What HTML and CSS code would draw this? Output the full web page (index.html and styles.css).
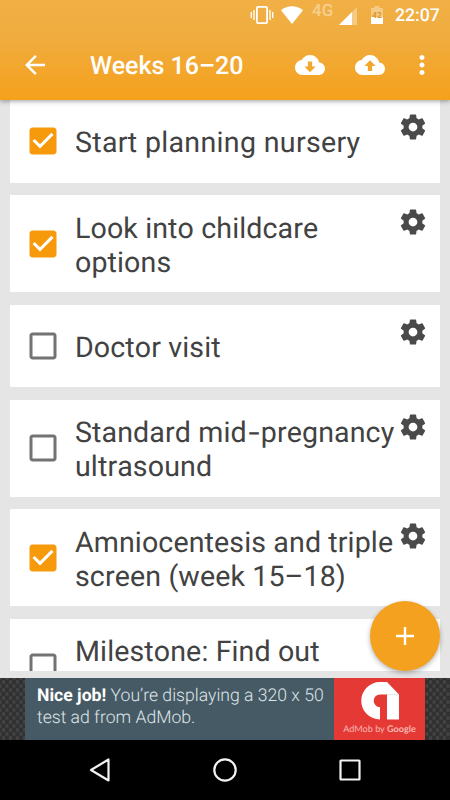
FILE: index.html
```html
<!DOCTYPE html>
<html lang="en">
<head>
<meta charset="utf-8">
<title>Weeks 16–20</title>
<link rel="stylesheet" href="styles.css">
</head>
<body>
<svg class="defs" aria-hidden="true">
  <symbol id="gear" viewBox="0 0 24 24"><path d="M19.43 12.98c.04-.32.07-.64.07-.98s-.03-.66-.07-.98l2.11-1.65c.19-.15.24-.42.12-.64l-2-3.46c-.12-.22-.39-.3-.61-.22l-2.49 1c-.52-.4-1.08-.73-1.69-.98l-.38-2.65C14.46 2.18 14.25 2 14 2h-4c-.25 0-.46.18-.49.42l-.38 2.65c-.61.25-1.17.59-1.69.98l-2.49-1c-.23-.09-.49 0-.61.22l-2 3.46c-.13.22-.07.49.12.64l2.11 1.65c-.04.32-.07.65-.07.98s.03.66.07.98l-2.11 1.65c-.19.15-.24.42-.12.64l2 3.46c.12.22.39.3.61.22l2.49-1c.52.4 1.08.73 1.69.98l.38 2.65c.03.24.24.42.49.42h4c.25 0 .46-.18.49-.42l.38-2.65c.61-.25 1.17-.59 1.69-.98l2.49 1c.23.09.49 0 .61-.22l2-3.46c.12-.22.07-.49-.12-.64l-2.11-1.65zM12 15.5c-1.93 0-3.5-1.57-3.5-3.5s1.57-3.5 3.5-3.5 3.5 1.57 3.5 3.5-1.57 3.5-3.5 3.5z"/></symbol>
  <symbol id="checked" viewBox="0 0 24 24"><path d="M19 3H5c-1.11 0-2 .9-2 2v14c0 1.1.89 2 2 2h14c1.11 0 2-.9 2-2V5c0-1.1-.89-2-2-2zm-9 14l-5-5 1.41-1.41L10 14.17l7.59-7.59L19 8l-9 9z"/></symbol>
  <symbol id="unchecked" viewBox="0 0 24 24"><path d="M19 5v14H5V5h14m0-2H5c-1.1 0-2 .9-2 2v14c0 1.1.9 2 2 2h14c1.1 0 2-.9 2-2V5c0-1.1-.9-2-2-2z"/></symbol>
</svg>
<div class="screen">
  <header class="header">
    <div class="status">
      <svg class="vibrate" width="24" height="20" viewBox="0 0 24 20"><rect x="6.9" y="1.9" width="10.200" height="16.200" rx="1" fill="none" stroke="#fff" stroke-width="1.8"/><path d="M1.300 7v6M4 5v10M20 5v10M22.700 7v6" stroke="#fff" stroke-width="1.4" fill="none"/></svg>
      <svg class="wifi" width="22" height="18" viewBox="0 0 22 18"><path d="M11 18L0 4.2C6.200-1.200 15.800-1.200 22 4.200z" fill="#fff"/></svg>
      <span class="network">4G</span>
      <svg class="signal" width="18" height="18" viewBox="0 0 18 18"><path d="M18 0v18H0z" fill="#fff" opacity=".35"/><path d="M13 5v13H0z" fill="#fff"/></svg>
      <svg class="battery" width="12" height="18" viewBox="0 0 12 18"><path d="M3.500 0h5v2H12v9H0V2h3.500z" fill="#fff" opacity=".35"/><path d="M0 11h12v7H0z" fill="#fff"/><text x="6" y="11.800" text-anchor="middle" class="level">42</text></svg>
      <span class="clock">22:07</span>
    </div>
    <div class="toolbar">
      <svg class="icon back" viewBox="0 0 24 24"><path d="M20 11H7.830l5.590-5.590L12 4l-8 8 8 8 1.410-1.410L7.830 13H20v-2z"/></svg>
      <h1 class="title">Weeks 16–20</h1>
      <svg class="icon" viewBox="0 0 24 24"><path d="M19.350 10.040C18.670 6.590 15.640 4 12 4 9.110 4 6.600 5.640 5.350 8.040 2.340 8.360 0 10.910 0 14c0 3.310 2.690 6 6 6h13c2.760 0 5-2.240 5-5 0-2.640-2.050-4.780-4.650-4.960zM16.500 13.200L12 17.700l-4.500-4.500h2.800V9.200h3.400v4z"/></svg>
      <svg class="icon" viewBox="0 0 24 24"><path d="M19.350 10.040C18.670 6.590 15.640 4 12 4 9.110 4 6.600 5.640 5.350 8.040 2.340 8.360 0 10.910 0 14c0 3.310 2.690 6 6 6h13c2.760 0 5-2.240 5-5 0-2.640-2.050-4.780-4.650-4.960zM13.700 12.700v4h-3.400v-4H7.500L12 8.200l4.500 4.500z"/></svg>
      <svg class="icon more" viewBox="0 0 24 24"><path d="M12 8c1.100 0 2-.9 2-2s-.9-2-2-2-2 .9-2 2 .9 2 2 2zm0 2c-1.100 0-2 .9-2 2s.9 2 2 2 2-.9 2-2-.9-2-2-2zm0 6c-1.100 0-2 .9-2 2s.9 2 2 2 2-.9 2-2-.9-2-2-2z"/></svg>
    </div>
  </header>
  <main class="content">
    <ul class="list">
      <li class="card"><svg class="box on"><use href="#checked"/></svg><span class="label wide">Start planning nursery</span><svg class="gear"><use href="#gear"/></svg></li>
      <li class="card tall"><svg class="box on"><use href="#checked"/></svg><span class="label">Look into childcare<br>options</span><svg class="gear"><use href="#gear"/></svg></li>
      <li class="card"><svg class="box"><use href="#unchecked"/></svg><span class="label">Doctor visit</span><svg class="gear"><use href="#gear"/></svg></li>
      <li class="card tall"><svg class="box"><use href="#unchecked"/></svg><span class="label">Standard mid<span class="hyphen">-</span>pregnancy<br>ultrasound</span><svg class="gear"><use href="#gear"/></svg></li>
      <li class="card tall"><svg class="box on"><use href="#checked"/></svg><span class="label">Amniocentesis and triple<br>screen (week 15–18)</span><svg class="gear"><use href="#gear"/></svg></li>
      <li class="card tall"><svg class="box"><use href="#unchecked"/></svg><span class="label">Milestone: Find out<br>&nbsp;</span></li>
    </ul>
    <button class="fab" aria-label="Add"><svg width="18" height="18" viewBox="0 0 18 18"><path d="M9 0v18M0 9h18" stroke="#fff" stroke-width="2.400"/></svg></button>
  </main>
  <aside class="ad">
    <p class="ad-text"><b>Nice job!</b> You’re displaying a 320 x 50<br>test ad from AdMob.</p>
    <div class="ad-logo">
      <svg width="38" height="38" viewBox="0 0 38 38"><path d="M19 0h7l12 12.500V37.500H26V12.500h-7a6.300 6.300 0 0 0 0 12.700V37.500A18.750 18.750 0 0 1 19 0z" fill="#fff"/><path d="M26 12.500h12" stroke="#ddd" stroke-width=".7"/></svg>
      <span>AdMob by <b>Google</b></span>
    </div>
  </aside>
  <nav class="nav">
    <svg width="24" height="26" viewBox="0 0 24 26"><path d="M20.500 2.500v21L3 13z"/></svg>
    <svg width="26" height="26" viewBox="0 0 26 26"><circle cx="13" cy="13" r="10.700"/></svg>
    <svg width="24" height="26" viewBox="0 0 24 26"><rect x="2.500" y="3.500" width="19" height="19" rx=".5"/></svg>
  </nav>
</div>
</body>
</html>
```
FILE: styles.css
```css
* { box-sizing: border-box; }
body { margin: 0; font-family: Roboto, "Liberation Sans", sans-serif; text-rendering: geometricPrecision; }
.defs { display: none; }
.screen { width: 450px; height: 800px; display: flex; flex-direction: column; overflow: hidden; background: #e5e5e5; }
svg { display: block; flex: none; }

.header { position: relative; z-index: 1; height: 100px; flex: none; color: #fff; background: linear-gradient(#f1af45 0, #f0ac3e 38px, #f5a11b 100px); box-shadow: 0 1px 5px rgba(0, 0, 0, .4); }
.status { height: 30px; display: flex; align-items: center; justify-content: flex-end; padding-right: 10px; }
.wifi { margin-left: 7px; }
.network { width: 20px; margin: -8px 0 0 9px; font-size: 17px; line-height: 20px; font-weight: 500; opacity: .4; }
.signal { margin: 2px 0 0 7px; }
.battery { margin-left: 14px; }
.level { font-size: 8.5px; font-weight: 700; fill: #e0982c; }
.clock { width: 45px; margin: 2px 0 0 12px; font-size: 17.7px; line-height: 24px; font-weight: 500; white-space: nowrap; }
.toolbar { height: 70px; display: flex; align-items: center; padding: 0 13px 0 20px; }
.icon { width: 30px; height: 30px; fill: #fff; margin-right: 30px; }
.icon.back { margin-right: 40px; }
.icon.more { margin: 0 0 0 -7.5px; }
.title { margin: 3px 0 0; width: 205px; font-size: 25px; line-height: 30px; font-weight: 500; white-space: nowrap; }

.content { position: relative; height: 577.5px; flex: none; padding: 0 10px 6.5px; }
.list { height: 571px; margin: 0; padding: 0; list-style: none; overflow: hidden; display: flex; flex-direction: column; gap: 12.5px; }
.card { height: 82.5px; flex: none; display: flex; align-items: center; padding: 0 12px 0 14.5px; background: #fff; }
.card.tall { height: 97px; }
.box { width: 36px; height: 36px; fill: #737373; }
.box.on { fill: #f69a0c; }
.label { flex: 1; margin: 2px 0 0 14.5px; font-size: 28.6px; line-height: 34px; letter-spacing: .11px; color: #424242; white-space: nowrap; font-kerning: none; }
.label.wide { letter-spacing: .31px; }
.hyphen { display: inline-block; width: 14px; transform: scaleX(1.4); text-align: center; }
.gear { width: 30px; height: 30px; margin-top: 12px; align-self: flex-start; fill: #4a4a4a; }
.fab { position: absolute; right: 10px; bottom: 6.5px; width: 70px; height: 70px; padding: 0; border: 0; border-radius: 50%; display: flex; align-items: center; justify-content: center; background: #f3a11e; box-shadow: 0 2px 5px rgba(0, 0, 0, .3); }

.ad { height: 62.5px; flex: none; display: flex; padding: 0 25px; background-color: #303030; background-image: radial-gradient(#424242 30%, transparent 45%), radial-gradient(#424242 30%, transparent 45%); background-size: 7px 8px; background-position: 0 0, 3.5px 4px; }
.ad-text { width: 309px; margin: 0; padding: 8.5px 0 0 12px; background: #465a65; color: #dfe5e8; font-size: 17.6px; line-height: 21.5px; font-weight: 300; white-space: nowrap; }
.ad-text b { font-weight: 700; color: #fff; }
.ad-logo { width: 91px; display: flex; flex-direction: column; align-items: center; padding-top: 4px; background: #e53935; color: #f7b5b2; font: 400 9.1px/14px Lato, sans-serif; white-space: nowrap; }
.ad-logo span { margin-top: 2.5px; }
.ad-logo b { font-weight: 700; }

.nav { height: 60px; flex: none; display: flex; align-items: center; justify-content: space-between; padding: 0 88px; background: #000; }
.nav svg { fill: none; stroke: #f2f2f2; stroke-width: 2.2; stroke-linejoin: round; }
```
